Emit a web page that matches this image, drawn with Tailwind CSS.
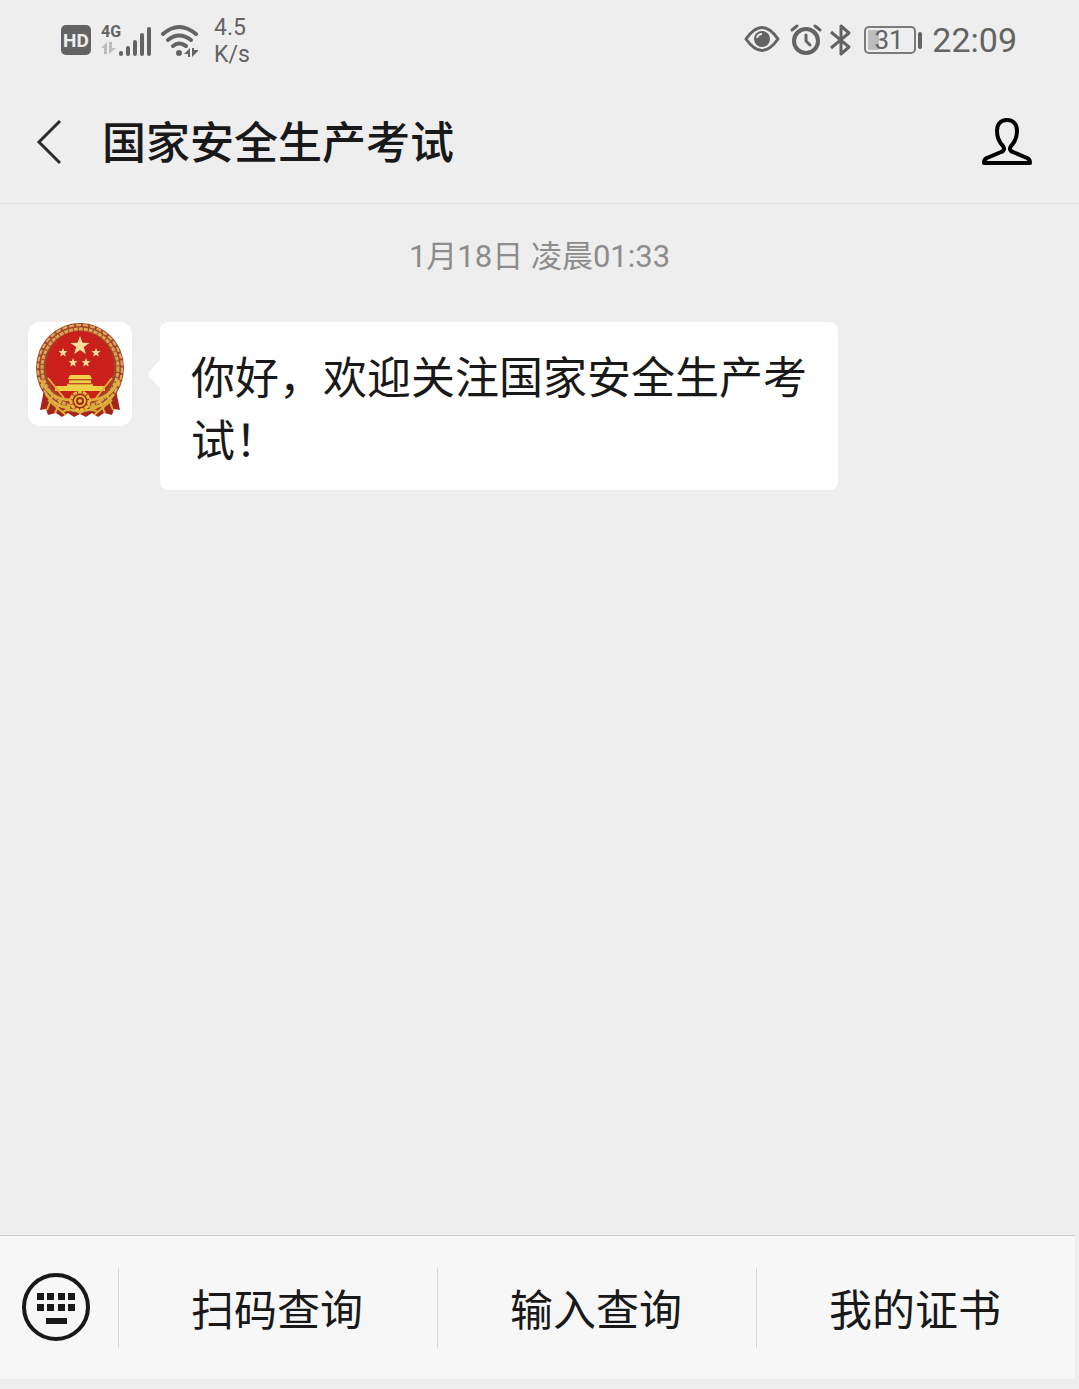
<!DOCTYPE html>
<html lang="zh-CN">
<head>
    <meta charset="UTF-8">
    <meta name="viewport" content="width=device-width, initial-scale=1.0">
    <title>国家安全生产考试</title>
    <script src="https://cdn.jsdelivr.net/npm/@tailwindcss/browser@4"></script>
</head>
<body class="min-h-screen flex flex-col bg-[#eeeeee] text-[#191919] font-[Roboto,'Noto_Sans_CJK_SC',sans-serif]">
    <!-- Status bar -->
    <div class="flex items-center justify-between h-20 pl-15 pr-[62px] text-[#636363]">
        <div class="flex items-center">
            <svg class="w-8 h-8" viewBox="0 0 32 32" role="img" aria-label="HD">
                <rect x="1" y="1" width="30" height="30" rx="5" fill="#636363"/>
                <text x="16" y="23" text-anchor="middle" font-size="19" font-weight="700" fill="#eeeeee">HD</text>
            </svg>
            <svg class="ml-2 w-13 h-9" viewBox="0 0 52 36" role="img" aria-label="4G">
                <text x="1" y="15" font-size="16" font-weight="700" fill="#636363">4G</text>
                <path d="M7 20v12H4v-6H1zM9 20h3v6h4l-7 6z" fill="#bdbdbd"/>
                <path d="M21 31v1M28 26v6M35 20v12M42 13v19M49 7v25" stroke="#636363" stroke-width="4" stroke-linecap="round"/>
            </svg>
            <svg class="ml-2 w-10 h-9" viewBox="0 0 40 36" fill="none" stroke="#636363" stroke-width="4" stroke-linecap="round" aria-hidden="true">
                <path d="M3 12Q19 -2 36 12"/>
                <path d="M8 18Q19 9 31 18"/>
                <path d="M13 24Q19 19 26 24"/>
                <circle cx="19" cy="31" r="3" fill="#636363" stroke="none"/>
                <path d="M30 26v9h-2v-3h-4zM32 26v9l6-6v-1h-4v-2z" fill="#636363" stroke="none"/>
            </svg>
            <div class="ml-[14px] pt-[2px] text-[23px] leading-[27px]">4.5<br>K/s</div>
        </div>
        <div class="flex items-center">
            <svg class="w-9 h-8" viewBox="0 0 36 32" fill="none" stroke="#636363" stroke-width="3" aria-hidden="true">
                <path d="M2 15Q18 -8 34 15Q18 38 2 15Z" stroke-linejoin="round"/>
                <circle cx="18" cy="15" r="8" fill="#636363" stroke="none"/>
                <path d="M13 14q1-4 5-4" stroke="#eeeeee" stroke-width="2"/>
            </svg>
            <svg class="ml-2 w-9 h-9" viewBox="0 0 36 36" fill="none" stroke="#636363" stroke-width="4" stroke-linecap="round" aria-hidden="true">
                <circle cx="18" cy="19" r="12"/>
                <path d="M4 8l5-4M32 8l-5-4" stroke-width="3"/>
                <path d="M18 13v6l4 4" stroke-width="3"/>
            </svg>
            <svg class="ml-1 w-6 h-9" viewBox="0 0 24 36" fill="none" stroke="#636363" stroke-width="3" stroke-linejoin="round" aria-hidden="true">
                <path d="M3 10L21 25L13 32V4L21 11L3 26"/>
            </svg>
            <svg class="ml-3 w-15 h-8" viewBox="0 0 60 32" aria-hidden="true">
                <rect x="1" y="3" width="50" height="26" rx="4" fill="none" stroke="#7a7a7a" stroke-width="2"/>
                <rect x="4" y="6" width="11" height="20" rx="1" fill="#bdbdbd"/>
                <rect x="54" y="8" width="4" height="17" rx="2" fill="#636363"/>
                <text x="25" y="25" text-anchor="middle" font-size="26" fill="#636363">31</text>
            </svg>
            <span class="ml-2 text-[34px] leading-10">22:09</span>
        </div>
    </div>

    <!-- Title bar -->
    <header class="flex items-center h-[124px] pl-8 pr-11 border-b border-[#e0e0e0]">
        <button type="button" aria-label="返回" class="w-9 h-12">
            <svg class="w-9 h-12" viewBox="0 0 36 48" fill="none" stroke="#2b2b2b" stroke-width="3">
                <path d="M28 3L7 24L28 45"/>
            </svg>
        </button>
        <h1 class="ml-[34px] pt-1 flex-1 text-[44px] leading-[64px] font-medium">国家安全生产考试</h1>
        <button type="button" aria-label="公众号资料" class="w-14 h-13">
            <svg class="w-14 h-13" viewBox="0 0 56 52" fill="none" stroke="#000" stroke-width="4" stroke-linejoin="round">
                <path d="M28 4C21 4 18 9 18 15C18 22 20 26 24 30C26 33 25 35 22 36L8 42C5 43 5 45 5 47H51C51 45 51 43 48 42L34 36C31 35 30 33 32 30C36 26 38 22 38 15C38 9 35 4 28 4Z"/>
            </svg>
        </button>
    </header>

    <!-- Messages -->
    <main class="flex-1 px-7">
        <p class="pt-8 text-center text-[31px] leading-[42px] text-[#8c8c8c]">1月18日 凌晨01:33</p>
        <div class="mt-11 flex items-start">
            <svg class="shrink-0 w-[104px] h-[104px] rounded-xl bg-white" viewBox="0 0 104 104" role="img" aria-label="国徽">
                <path d="M16 68L12 88L18 87L20 93L28 91L34 95L40 91L46 95L52 92L58 95L64 91L70 95L76 91L84 93L86 87L92 88L88 68Z" fill="#a5251b"/>
                <ellipse cx="52" cy="46" rx="44" ry="45" fill="#a2442c"/>
                <ellipse cx="52" cy="46" rx="42" ry="43" fill="none" stroke="#dcae5c" stroke-width="2" stroke-dasharray="5 2"/>
                <ellipse cx="52" cy="46" rx="38" ry="39" fill="none" stroke="#d9a550" stroke-width="3" stroke-dasharray="4 1"/>
                <ellipse cx="52" cy="45" rx="34" ry="36" fill="#c9201c"/>
                <g fill="#f8e09a">
                    <path d="M52 14l2.400 6.700 7 .200-5.600 4.200 2 6.800-5.800-4-5.800 4 2-6.800-5.600-4.200 7-.200z"/>
                    <path id="star" d="M35 26l1.200 3.100 3.300.200-2.600 2 .900 3.200-2.800-1.800-2.800 1.800.900-3.200-2.600-2 3.300-.200z"/>
                    <use href="#star" x="33"/>
                    <use href="#star" x="10" y="10"/>
                    <use href="#star" x="23" y="10"/>
                </g>
                <!-- Gate -->
                <path d="M42 53H62L64 57H40zM41 58H63V61H41zM39 62H65V64H77V69H27V64H39z" fill="#efd048"/>
                <path d="M41 58H63M39 62H65" stroke="#b8791f" fill="none"/>
                <!-- Wreath ends, ribbon and gear -->
                <g fill="none" stroke="#dcb03a" stroke-width="3">
                    <path d="M13 58Q22 78 43 78M91 58Q82 78 61 78"/>
                    <path d="M18 72Q27 85 42 86M86 72Q77 85 62 86"/>
                    <path d="M20 56L36 76M84 56L68 76" stroke-width="2"/>
                    <path d="M25 72L19 88M79 72L85 88M33 78L27 91M71 78L77 91M20 78L38 93M84 78L66 93" stroke-width="2"/>
                    <path d="M34 90Q43 85 52 91Q61 85 70 90" stroke-width="2"/>
                </g>
                <circle cx="52" cy="79" r="9" fill="#a5251b" stroke="#e5bd3c" stroke-width="3" stroke-dasharray="4 1"/>
                <circle cx="52" cy="79" r="5" fill="none" stroke="#e5bd3c" stroke-width="2"/>
                <circle cx="52" cy="79" r="2" fill="#e5bd3c"/>
            </svg>
            <svg class="mt-9 ml-4 shrink-0 w-3 h-8" viewBox="0 0 12 32" fill="#fff" aria-hidden="true">
                <path d="M12 2L1 14Q0 16 1 18L12 30Z"/>
            </svg>
            <div class="max-w-[678px] rounded-lg bg-white pl-[31px] pr-6 pt-[26px] pb-4 text-[44px] leading-[63px]">你好，欢迎关注国家安全生产考试！</div>
        </div>
    </main>

    <!-- Menu bar -->
    <nav class="flex items-center h-36 mr-1 mb-[10px] bg-[#f7f7f7] border-t border-[#cccccc]">
        <button type="button" aria-label="键盘" class="shrink-0 w-[118px] pl-5">
            <svg class="w-18 h-18" viewBox="0 0 72 72" fill="#191919">
                <circle cx="36" cy="35" r="32" fill="none" stroke="#191919" stroke-width="4"/>
                <path d="M17 21h7v7h-7zM27 21h7v7h-7zM38 21h7v7h-7zM48 21h7v7h-7zM17 32h7v7h-7zM27 32h7v7h-7zM38 32h7v7h-7zM48 32h7v7h-7zM26 46h21v6h-21z"/>
            </svg>
        </button>
        <button type="button" class="flex-1 h-20 pt-[6px] pr-[2px] border-l border-[#d8d8d8] text-[43px] leading-[64px]">扫码查询</button>
        <button type="button" class="flex-1 h-20 pt-[6px] pr-[2px] border-l border-[#d8d8d8] text-[43px] leading-[64px]">输入查询</button>
        <button type="button" class="flex-1 h-20 pt-[6px] pr-[2px] border-l border-[#d8d8d8] text-[43px] leading-[64px]">我的证书</button>
    </nav>
</body>
</html>
